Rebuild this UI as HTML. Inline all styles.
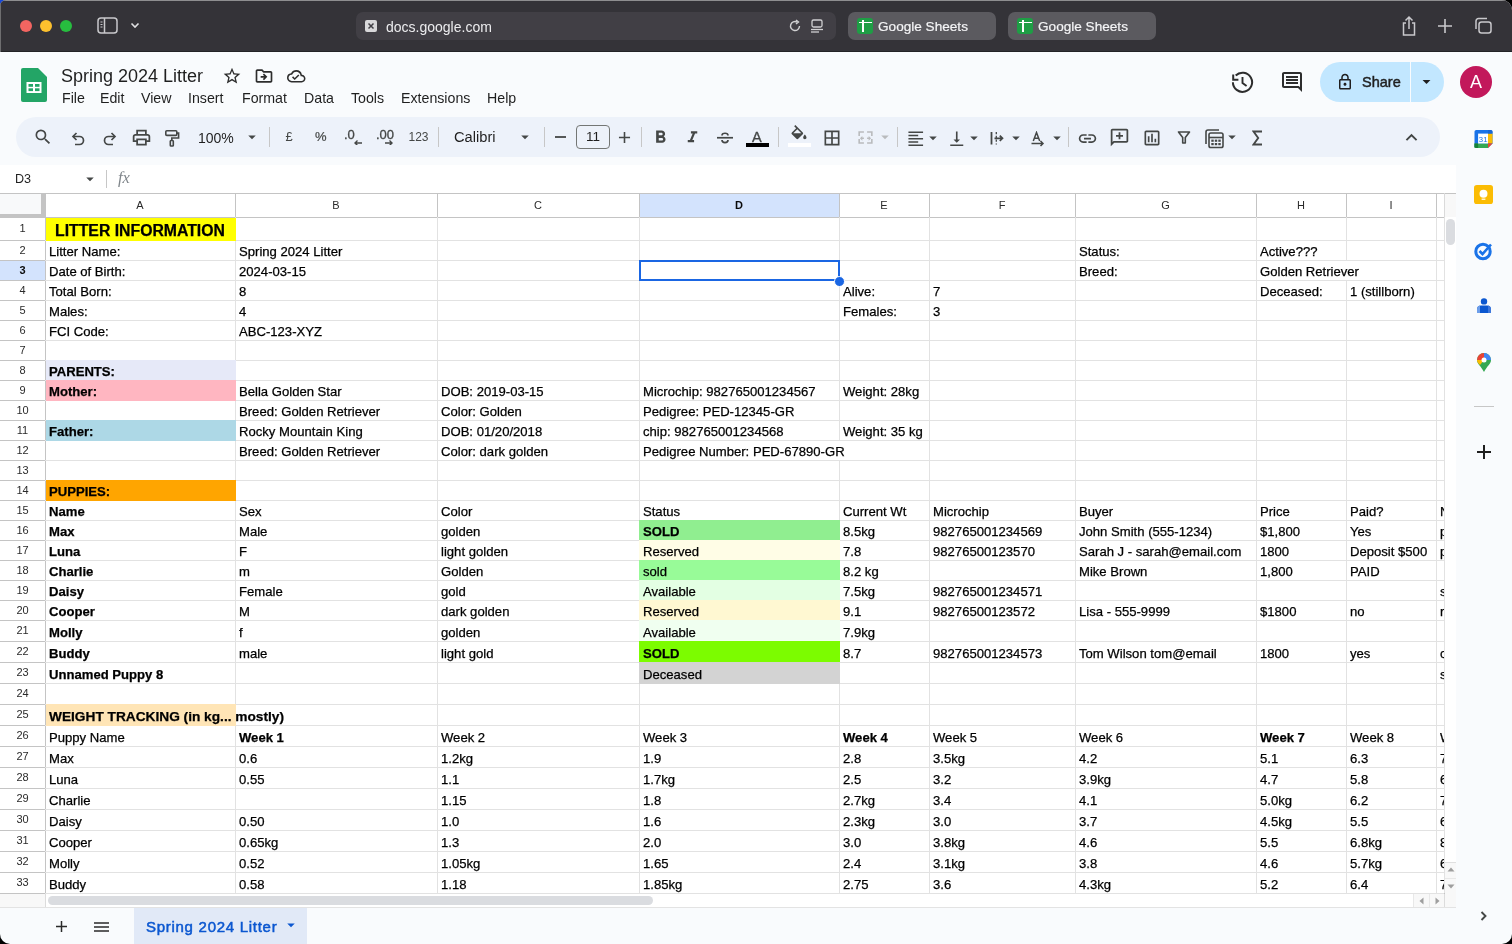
<!DOCTYPE html>
<html><head><meta charset="utf-8">
<style>
*{margin:0;padding:0;box-sizing:border-box}
html,body{width:1512px;height:944px;overflow:hidden;background:#000;font-family:"Liberation Sans",sans-serif}
.abs{position:absolute}
#win{position:absolute;left:0;top:0;width:1512px;height:944px;background:#f9fbfd;border-radius:6px 10px 10px 10px;overflow:hidden;will-change:transform}
#safari{position:absolute;left:0;top:0;width:1512px;height:52px;background:#343338;border-bottom:1px solid #232326}
.tl{position:absolute;top:20px;width:12px;height:12px;border-radius:50%}
.stab{position:absolute;top:12px;height:28px;width:148px;background:#5b5a5f;border-radius:7px;color:#f4f4f6;font-size:13.6px;line-height:29px;-webkit-text-stroke:0.2px #f4f4f6}
.sico{position:absolute;top:6px;left:9px;width:16px;height:16px;background:#1e9e45;border-radius:3px}.sico:before{content:"";position:absolute;left:1.5px;top:3.5px;width:13px;height:1.8px;background:#fff}.sico:after{content:"";position:absolute;left:5px;top:2px;width:1.8px;height:12px;background:#fff}
.menu{position:absolute;top:89px;font-size:14.2px;color:#1f1f1f}
.tb{position:absolute}
.hl{position:absolute;left:45px;width:1399px;height:1px;background:#e2e2e2}
.vl{position:absolute;width:1px;background:#e2e2e2}
.c{position:absolute;font-size:13.1px;color:#000;white-space:nowrap;-webkit-text-stroke:0.25px #000}
.b{font-weight:bold}
.rn{position:absolute;left:0;width:45px;text-align:center;font-size:11px;color:#2a2a2a}
.ch{position:absolute;top:193px;height:24px;line-height:24px;text-align:center;font-size:11px;color:#2a2a2a}
</style></head><body>
<div class="abs" style="left:0;top:0;width:6px;height:6px;background:#1546d8"></div>
<div id="win">
<!-- SAFARI BAR -->
<div id="safari">
  <div class="abs" style="left:0;top:0;width:1512px;height:1px;background:#8e8e90"></div>
  <div class="abs" style="left:0;top:0;width:1px;height:52px;background:#6e6e70"></div>
  <div class="tl" style="left:20px;background:#f36561"></div>
  <div class="tl" style="left:40px;background:#fcc02e"></div>
  <div class="tl" style="left:60px;background:#27bd3f"></div>
  <svg class="abs" style="left:97px;top:17px" width="22" height="18" viewBox="0 0 22 18"><rect x="1" y="1" width="19" height="15" rx="3" fill="none" stroke="#c9c9cc" stroke-width="1.5"/><line x1="7.5" y1="1" x2="7.5" y2="16" stroke="#c9c9cc" stroke-width="1.5"/><line x1="3.5" y1="5" x2="5.5" y2="5" stroke="#c9c9cc"/><line x1="3.5" y1="7.5" x2="5.5" y2="7.5" stroke="#c9c9cc"/><line x1="3.5" y1="10" x2="5.5" y2="10" stroke="#c9c9cc"/></svg>
  <svg class="abs" style="left:130px;top:21px" width="10" height="8" viewBox="0 0 10 8"><path d="M1.5 2.5 L5 6 L8.5 2.5" fill="none" stroke="#e0e0e2" stroke-width="1.6"/></svg>
  <div class="abs" style="left:356px;top:12px;width:480px;height:28px;background:#413f45;border-radius:7px"></div>
  <div class="abs" style="left:365px;top:20px;width:12px;height:12px;background:#d8d8da;border-radius:2px"></div>
  <svg class="abs" style="left:365px;top:20px" width="12" height="12" viewBox="0 0 12 12"><path d="M3.5 3.5 L8.5 8.5 M8.5 3.5 L3.5 8.5" stroke="#413f45" stroke-width="1.5"/></svg>
  <div class="abs" style="left:386px;top:19px;font-size:14px;color:#ececee;line-height:16px">docs.google.com</div>
  <svg class="abs" style="left:788px;top:19px" width="14" height="14" viewBox="0 0 14 14"><path d="M11.5 7 A4.5 4.5 0 1 1 9 3" fill="none" stroke="#d0d0d2" stroke-width="1.4"/><path d="M8 1 L10.5 3 L8 5" fill="none" stroke="#d0d0d2" stroke-width="1.4"/></svg>
  <svg class="abs" style="left:810px;top:18px" width="14" height="16" viewBox="0 0 14 16"><rect x="2" y="2" width="10" height="7" rx="1.5" fill="none" stroke="#d0d0d2" stroke-width="1.3"/><line x1="1" y1="11.5" x2="13" y2="11.5" stroke="#d0d0d2" stroke-width="1.3"/><line x1="1" y1="14" x2="9" y2="14" stroke="#d0d0d2" stroke-width="1.3"/></svg>
  <div class="stab" style="left:848px"><div class="sico"></div><span style="position:absolute;left:30px">Google Sheets</span></div>
  <div class="stab" style="left:1008px"><div class="sico"></div><span style="position:absolute;left:30px">Google Sheets</span></div>
  <svg class="abs" style="left:1400px;top:15px" width="18" height="22" viewBox="0 0 18 22"><path d="M6 8 H3.5 V20 H14.5 V8 H12" fill="none" stroke="#c9c9cc" stroke-width="1.5"/><path d="M9 14 V2 M5.5 5.5 L9 2 L12.5 5.5" fill="none" stroke="#c9c9cc" stroke-width="1.5"/></svg>
  <svg class="abs" style="left:1437px;top:18px" width="16" height="16" viewBox="0 0 16 16"><path d="M8 1 V15 M1 8 H15" stroke="#c9c9cc" stroke-width="1.6"/></svg>
  <svg class="abs" style="left:1474px;top:17px" width="19" height="18" viewBox="0 0 19 18"><rect x="5" y="5" width="12" height="11" rx="2.5" fill="none" stroke="#c9c9cc" stroke-width="1.5"/><path d="M2 12 V4 A2.5 2.5 0 0 1 4.5 1.5 H13" fill="none" stroke="#c9c9cc" stroke-width="1.5"/></svg>
</div>
<svg class="abs" style="left:21px;top:68px" width="26" height="34" viewBox="0 0 26 34"><path d="M2 0 H17 L26 9 V32 A2 2 0 0 1 24 34 H2 A2 2 0 0 1 0 32 V2 A2 2 0 0 1 2 0Z" fill="#23a566"/><path d="M17 0 L26 9 H19 A2 2 0 0 1 17 7Z" fill="#8ed1b1" opacity="0.0"/><rect x="5.5" y="14" width="15" height="11" fill="#fff"/><rect x="7.5" y="16" width="4.5" height="2.8" fill="#23a566"/><rect x="14" y="16" width="4.5" height="2.8" fill="#23a566"/><rect x="7.5" y="20.3" width="4.5" height="2.8" fill="#23a566"/><rect x="14" y="20.3" width="4.5" height="2.8" fill="#23a566"/></svg>
<div class="abs" style="left:61px;top:64.5px;font-size:18px;color:#1f1f1f;line-height:22px">Spring 2024 Litter</div>
<svg class="abs" style="left:222px;top:65.5px" width="20" height="20" viewBox="0 0 24 24"><path d="M22 9.24l-7.19-.62L12 2 9.19 8.63 2 9.24l5.46 4.73L5.82 21 12 17.27 18.18 21l-1.63-7.03L22 9.24zM12 15.4l-3.76 2.27 1-4.28-3.32-2.88 4.38-.38L12 6.1l1.71 4.04 4.38.38-3.32 2.88 1 4.28L12 15.4z" fill="#2d2d2d"/></svg>
<svg class="abs" style="left:254px;top:65.5px" width="20" height="20" viewBox="0 0 24 24"><path d="M20 6h-8l-2-2H4c-1.1 0-1.99.9-1.99 2L2 18c0 1.1.9 2 2 2h16c1.1 0 2-.9 2-2V8c0-1.1-.9-2-2-2zm0 12H4V6h5.17l2 2H20v10zm-7.84-6H8v2h4.16l-1.59 1.59L11.99 17 16 13.01 11.99 9l-1.41 1.41L12.16 12z" fill="#2d2d2d"/></svg>
<svg class="abs" style="left:287px;top:66.5px" width="18.5" height="18.5" viewBox="0 0 24 24"><path d="M19.35 10.04A7.49 7.49 0 0 0 12 4C9.11 4 6.6 5.64 5.35 8.04A5.994 5.994 0 0 0 0 14c0 3.31 2.69 6 6 6h13c2.76 0 5-2.24 5-5 0-2.64-2.05-4.78-4.65-4.96zM19 18H6c-2.21 0-4-1.79-4-4 0-2.05 1.53-3.76 3.56-3.97l1.07-.11.5-.95A5.469 5.469 0 0 1 12 6c2.62 0 4.88 1.86 5.39 4.43l.3 1.5 1.53.11A2.98 2.98 0 0 1 22 15c0 1.65-1.35 3-3 3zm-9-3.82l-2.09-2.09L6.5 13.5 10 17l6.01-6.01-1.41-1.41z" fill="#2d2d2d"/></svg>
<div class="menu" style="left:62px;line-height:18px">File</div>
<div class="menu" style="left:100px;line-height:18px">Edit</div>
<div class="menu" style="left:141px;line-height:18px">View</div>
<div class="menu" style="left:188px;line-height:18px">Insert</div>
<div class="menu" style="left:242px;line-height:18px">Format</div>
<div class="menu" style="left:304px;line-height:18px">Data</div>
<div class="menu" style="left:351px;line-height:18px">Tools</div>
<div class="menu" style="left:401px;line-height:18px">Extensions</div>
<div class="menu" style="left:487px;line-height:18px">Help</div>
<svg class="abs" style="left:1230px;top:69.5px" width="24" height="24" viewBox="0 0 24 24"><path d="M2.9 12.3 A9.6 9.6 0 1 0 5.7 5.5" fill="none" stroke="#2d2d2d" stroke-width="2"/><path d="M3.2 4.4 V9.7 H8.4" fill="none" stroke="#2d2d2d" stroke-width="2"/><path d="M12.5 7 V13 L16.6 16.1" fill="none" stroke="#2d2d2d" stroke-width="1.9"/></svg>
<svg class="abs" style="left:1280px;top:70px" width="24" height="24" viewBox="0 0 24 24"><path d="M21.99 4c0-1.1-.89-2-1.99-2H4c-1.1 0-2 .9-2 2v12c0 1.1.9 2 2 2h14l4 4-.01-18zM20 4v13.17L18.83 16H4V4h16zM6 12h12v2H6zm0-3h12v2H6zm0-3h12v2H6z" fill="#2d2d2d"/></svg>
<div class="abs" style="left:1320px;top:62px;width:124px;height:40px;border-radius:20px;background:#c2e7ff"></div>
<div class="abs" style="left:1410px;top:62px;width:1px;height:40px;background:#f9fbfd"></div>
<svg class="abs" style="left:1336px;top:73px" width="18" height="18" viewBox="0 0 24 24"><path d="M18 8h-1V6c0-2.76-2.24-5-5-5S7 3.24 7 6v2H6c-1.1 0-2 .9-2 2v10c0 1.1.9 2 2 2h12c1.1 0 2-.9 2-2V10c0-1.1-.9-2-2-2zM9 6c0-1.66 1.34-3 3-3s3 1.34 3 3v2H9V6zm9 14H6V10h12v10zm-6-3c1.1 0 2-.9 2-2s-.9-2-2-2-2 .9-2 2 .9 2 2 2z" fill="#1f1f1f"/></svg>
<div class="abs" style="left:1362px;top:73px;font-size:14.5px;color:#1f1f1f;line-height:18px;-webkit-text-stroke:0.45px #1f1f1f">Share</div>
<svg class="abs" style="left:1417px;top:72px" width="19" height="19" viewBox="0 0 24 24"><path d="M7 10l5 5 5-5z" fill="#1f1f1f"/></svg>
<div class="abs" style="left:1460px;top:66px;width:32px;height:32px;border-radius:50%;background:#c2185b;color:#fff;font-size:18px;line-height:32px;text-align:center">A</div>
<div class="abs" style="left:16px;top:117px;width:1424px;height:40px;border-radius:20px;background:#edf2fa"></div>
<svg class="abs" style="left:33px;top:127px" width="20" height="20" viewBox="0 0 24 24"><path d="M15.5 14h-.79l-.28-.27A6.471 6.471 0 0 0 16 9.5 6.5 6.5 0 1 0 9.5 16c1.61 0 3.09-.59 4.23-1.57l.27.28v.79l5 4.99L20.49 19l-4.99-5zm-6 0C7.01 14 5 11.99 5 9.5S7.01 5 9.5 5 14 7.01 14 9.5 11.99 14 9.5 14z" fill="#444746"/></svg>
<svg class="abs" style="left:69px;top:130px" width="16" height="16" viewBox="0 0 16 16"><path d="M4.5 6.5 H10.5 A4 4 0 0 1 10.5 14.5 H6" fill="none" stroke="#444746" stroke-width="1.7"/><path d="M7.5 3 L4 6.5 L7.5 10" fill="none" stroke="#444746" stroke-width="1.7"/></svg>
<svg class="abs" style="left:103px;top:130px" width="16" height="16" viewBox="0 0 16 16"><path d="M11.5 6.5 H5.5 A4 4 0 0 0 5.5 14.5 H10" fill="none" stroke="#444746" stroke-width="1.7"/><path d="M8.5 3 L12 6.5 L8.5 10" fill="none" stroke="#444746" stroke-width="1.7"/></svg>
<svg class="abs" style="left:131px;top:127px" width="21" height="21" viewBox="0 0 24 24"><path d="M19 8h-1V3H6v5H5c-1.66 0-3 1.34-3 3v6h4v4h12v-4h4v-6c0-1.66-1.34-3-3-3zM8 5h8v3H8V5zm8 14H8v-4h8v4zm2-4v-2H6v2H4v-4c0-.55.45-1 1-1h14c.55 0 1 .45 1 1v4h-2z" fill="#444746"/></svg>

<svg class="abs" style="left:164px;top:129px" width="16" height="18" viewBox="0 0 16 18"><rect x="1.8" y="1.8" width="11" height="4.6" rx="1" fill="none" stroke="#444746" stroke-width="1.6"/><path d="M12.8 4.1 H14.6 V9 H7.8 V11.5" fill="none" stroke="#444746" stroke-width="1.6"/><rect x="6.3" y="11.5" width="3" height="5.5" rx="0.8" fill="none" stroke="#444746" stroke-width="1.6"/></svg>
<div class="abs" style="left:198px;top:129px;font-size:14px;color:#1f1f1f;line-height:18px">100%</div>
<svg class="abs" style="left:243px;top:128px" width="18" height="18" viewBox="0 0 24 24"><path d="M7 10l5 5 5-5z" fill="#444746"/></svg>
<div class="abs" style="left:269px;top:127px;width:1px;height:20px;background:#c7c7c7"></div>
<div class="abs" style="left:285.5px;top:127.5px;font-size:13px;color:#444746;line-height:18px">£</div>
<div class="abs" style="left:315px;top:127.5px;font-size:13px;color:#444746;line-height:18px;-webkit-text-stroke:0.2px #444746">%</div>
<div class="abs" style="left:344px;top:127px;font-size:13px;color:#444746;line-height:16px;-webkit-text-stroke:0.3px #444746">.0</div>
<svg class="abs" style="left:353px;top:140px" width="10" height="5" viewBox="0 -1.5 10 5"><path d="M9 1.5 H2 M4.5 -1 L2 1.5 L4.5 4" fill="none" stroke="#444746" stroke-width="1.4"/></svg>
<div class="abs" style="left:376px;top:127px;font-size:13px;color:#444746;line-height:16px;-webkit-text-stroke:0.3px #444746">.00</div>
<svg class="abs" style="left:384px;top:140px" width="10" height="5" viewBox="0 -1.5 10 5"><path d="M1 1.5 H8 M5.5 -1 L8 1.5 L5.5 4" fill="none" stroke="#444746" stroke-width="1.4"/></svg>
<div class="abs" style="left:408.5px;top:128.5px;font-size:12px;color:#444746;line-height:16px">123</div>
<div class="abs" style="left:438px;top:127px;width:1px;height:20px;background:#c7c7c7"></div>
<div class="abs" style="left:454px;top:128px;font-size:14.7px;color:#1f1f1f;line-height:18px">Calibri</div>
<svg class="abs" style="left:516px;top:128px" width="18" height="18" viewBox="0 0 24 24"><path d="M7 10l5 5 5-5z" fill="#444746"/></svg>
<div class="abs" style="left:544px;top:127px;width:1px;height:20px;background:#c7c7c7"></div>
<svg class="abs" style="left:555px;top:136px" width="11" height="2" viewBox="0 0 11 2"><path d="M0 1 H11" stroke="#444746" stroke-width="1.8"/></svg>
<div class="abs" style="left:576px;top:125px;width:34px;height:24px;border:1px solid #747775;border-radius:4px;font-size:13.5px;color:#1f1f1f;line-height:22px;text-align:center">11</div>
<svg class="abs" style="left:615px;top:128px" width="19" height="19" viewBox="0 0 24 24"><path d="M19 13h-6v6h-2v-6H5v-2h6V5h2v6h6v2z" fill="#444746"/></svg>
<div class="abs" style="left:641px;top:127px;width:1px;height:20px;background:#c7c7c7"></div>
<svg class="abs" style="left:650px;top:127px" width="21" height="21" viewBox="0 0 24 24"><path d="M15.6 10.79c.97-.67 1.65-1.77 1.65-2.79 0-2.26-1.75-4-4-4H7v14h7.04c2.09 0 3.71-1.7 3.71-3.79 0-1.52-.86-2.82-2.15-3.42zM10 6.5h3c.83 0 1.5.67 1.5 1.5s-.67 1.5-1.5 1.5h-3v-3zm3.5 9H10v-3h3.5c.83 0 1.5.67 1.5 1.5s-.67 1.5-1.5 1.5z" fill="#444746"/></svg>
<svg class="abs" style="left:683px;top:128px" width="19" height="19" viewBox="0 0 24 24"><path d="M10 4v3h2.21l-3.42 8H6v3h8v-3h-2.21l3.42-8H18V4z" fill="#444746"/></svg>
<svg class="abs" style="left:717px;top:127.5px" width="16" height="16" viewBox="0 0 16 16"><path d="M11 7.5 C11 4.5 5 4.5 5 7.5" fill="none" stroke="#444746" stroke-width="1.7"/><path d="M5 12 C5 15.5 11 15.5 11 12" fill="none" stroke="#444746" stroke-width="1.7"/><path d="M0 9.75 H16" stroke="#444746" stroke-width="1.7"/></svg>
<div class="abs" style="left:752px;top:128.5px;font-size:14.5px;color:#444746;line-height:16px;-webkit-text-stroke:0.35px #444746">A</div>
<div class="abs" style="left:746px;top:143px;width:23px;height:4px;background:#000"></div>
<div class="abs" style="left:778px;top:127px;width:1px;height:20px;background:#c7c7c7"></div>
<svg class="abs" style="left:789px;top:125px" width="20" height="20" viewBox="0 0 24 24"><path d="M16.56 8.94L7.62 0 6.21 1.41l2.38 2.38-5.15 5.15a1.49 1.49 0 0 0 0 2.12l5.5 5.5c.29.29.68.44 1.06.44s.77-.15 1.06-.44l5.5-5.5c.59-.58.59-1.53 0-2.12zM5.21 10L10 5.21 14.79 10H5.21zM19 11.5s-2 2.17-2 3.5c0 1.1.9 2 2 2s2-.9 2-2c0-1.33-2-3.5-2-3.5z" fill="#444746"/></svg>
<div class="abs" style="left:788px;top:143px;width:23px;height:4px;background:#fff"></div>
<svg class="abs" style="left:822px;top:128px" width="20" height="20" viewBox="0 0 24 24"><path d="M3 3v18h18V3H3zm8 16H5v-6h6v6zm0-8H5V5h6v6zm8 8h-6v-6h6v6zm0-8h-6V5h6v6z" fill="#444746"/></svg>
<svg class="abs" style="left:856px;top:128px" width="19" height="19" viewBox="0 0 24 24"><path d="M5 10H3V4h7v2H5v4zm14 0h2V4h-7v2h5v4zM5 14H3v6h7v-2H5v-4zm14 4h-5v2h7v-6h-2v4zM10 12H8v-2l-3 3 3 3v-2h2zm4 0h2v-2l3 3-3 3v-2h-2z" fill="#b9bbbd"/></svg>
<svg class="abs" style="left:876px;top:128px" width="18" height="18" viewBox="0 0 24 24"><path d="M7 10l5 5 5-5z" fill="#b9bbbd"/></svg>
<div class="abs" style="left:897px;top:127px;width:1px;height:20px;background:#c7c7c7"></div>
<svg class="abs" style="left:906px;top:128.5px" width="19.5" height="19.5" viewBox="0 0 24 24"><path d="M15 15H3v2h12v-2zm0-8H3v2h12V7zM3 13h18v-2H3v2zm0 8h18v-2H3v2zM3 3v2h18V3H3z" fill="#444746"/></svg>
<svg class="abs" style="left:924px;top:128.5px" width="18" height="18" viewBox="0 0 24 24"><path d="M7 10l5 5 5-5z" fill="#444746"/></svg>
<svg class="abs" style="left:946.5px;top:128.5px" width="19.5" height="19.5" viewBox="0 0 24 24"><path d="M16 13h-3V3h-2v10H8l4 4 4-4zM4 19v2h16v-2H4z" fill="#444746"/></svg>
<svg class="abs" style="left:965px;top:128.5px" width="18" height="18" viewBox="0 0 24 24"><path d="M7 10l5 5 5-5z" fill="#444746"/></svg>
<svg class="abs" style="left:990px;top:131px" width="15" height="15" viewBox="0 0 15 15"><path d="M1.5 1 V13.5" stroke="#444746" stroke-width="1.8"/><path d="M6.3 1 V13.5" stroke="#444746" stroke-width="1.3" stroke-dasharray="2.2 1.6"/><path d="M4.5 7.3 H12.5 M9.8 4.6 L12.5 7.3 L9.8 10" fill="none" stroke="#444746" stroke-width="1.7"/></svg>
<svg class="abs" style="left:1006.5px;top:128.5px" width="18" height="18" viewBox="0 0 24 24"><path d="M7 10l5 5 5-5z" fill="#444746"/></svg>
<svg class="abs" style="left:1031px;top:130.5px" width="14" height="16" viewBox="0 0 14 16"><path d="M2.3 10 L5.5 1.5 L8.7 10 M3.4 7.2 H7.6" fill="none" stroke="#444746" stroke-width="1.5"/><path d="M0.5 12.5 H12 M9.5 10 L12 12.5 L9.5 15" fill="none" stroke="#444746" stroke-width="1.5"/></svg>
<svg class="abs" style="left:1047.5px;top:128.5px" width="18" height="18" viewBox="0 0 24 24"><path d="M7 10l5 5 5-5z" fill="#444746"/></svg>
<div class="abs" style="left:1068px;top:127px;width:1px;height:20px;background:#c7c7c7"></div>
<svg class="abs" style="left:1077px;top:128px" width="21" height="21" viewBox="0 0 24 24"><path d="M3.9 12c0-1.71 1.39-3.1 3.1-3.1h4V7H7c-2.76 0-5 2.24-5 5s2.24 5 5 5h4v-1.9H7c-1.71 0-3.1-1.39-3.1-3.1zM8 13h8v-2H8v2zm9-6h-4v1.9h4c1.71 0 3.1 1.39 3.1 3.1s-1.39 3.1-3.1 3.1h-4V17h4c2.76 0 5-2.24 5-5s-2.24-5-5-5z" fill="#444746"/></svg>
<svg class="abs" style="left:1109px;top:127px" width="21" height="21" viewBox="0 0 24 24"><path d="M4 2h16c1.1 0 2 .9 2 2v12c0 1.1-.9 2-2 2H6l-4 4V4c0-1.1.9-2 2-2zm0 2v13.17L5.17 16H20V4H4zm7 2h2v3h3v2h-3v3h-2v-3H8V9h3V6z" fill="#444746"/></svg>
<svg class="abs" style="left:1142px;top:128px" width="20" height="20" viewBox="0 0 24 24"><path d="M19 3H5c-1.1 0-2 .9-2 2v14c0 1.1.9 2 2 2h14c1.1 0 2-.9 2-2V5c0-1.1-.9-2-2-2zm0 16H5V5h14v14zM7 10h2v7H7zm4-3h2v10h-2zm4 6h2v4h-2z" fill="#444746"/></svg>
<svg class="abs" style="left:1177px;top:130px" width="14" height="15" viewBox="0 0 14 15"><path d="M1.5 2 H12.5 L8.3 7.5 V13 H5.7 V7.5 Z" fill="none" stroke="#444746" stroke-width="1.6" stroke-linejoin="round"/></svg>
<svg class="abs" style="left:1205px;top:129px" width="19" height="20" viewBox="0 0 19 20"><path d="M1 15 V3 A2 2 0 0 1 3 1 H14" fill="none" stroke="#444746" stroke-width="1.6"/><rect x="4" y="4" width="14" height="14.5" rx="1.8" fill="none" stroke="#444746" stroke-width="1.6"/><path d="M4 8.5 H18" stroke="#444746" stroke-width="1.6"/><g fill="#444746"><rect x="6.3" y="10.6" width="2.4" height="2.2"/><rect x="9.8" y="10.6" width="2.4" height="2.2"/><rect x="13.3" y="10.6" width="2.4" height="2.2"/><rect x="6.3" y="14" width="2.4" height="2.2"/><rect x="9.8" y="14" width="2.4" height="2.2"/><rect x="13.3" y="14" width="2.4" height="2.2"/></g></svg>
<svg class="abs" style="left:1223px;top:128px" width="18" height="18" viewBox="0 0 24 24"><path d="M7 10l5 5 5-5z" fill="#444746"/></svg>
<svg class="abs" style="left:1252px;top:130px" width="11" height="16" viewBox="0 0 11 16"><path d="M10 1.5 H1.5 L6.2 8 L1.5 14.5 H10" fill="none" stroke="#444746" stroke-width="1.9" stroke-linejoin="miter"/></svg>
<svg class="abs" style="left:1400px;top:126px" width="23" height="23" viewBox="0 0 24 24"><path d="M12 8l-6 6 1.41 1.41L12 10.83l4.59 4.58L18 14z" fill="#444746"/></svg>
<div class="abs" style="left:0;top:165px;width:1456px;height:28px;background:#fff"></div>
<div class="abs" style="left:15px;top:171px;font-size:12.6px;color:#1f1f1f;line-height:16px">D3</div>
<svg class="abs" style="left:81px;top:170px" width="18" height="18" viewBox="0 0 24 24"><path d="M7 10l5 5 5-5z" fill="#444746"/></svg>
<div class="abs" style="left:106px;top:170px;width:1px;height:18px;background:#c7c7c7"></div>
<div class="abs" style="left:118px;top:169px;font-size:16.5px;color:#80868b;line-height:18px;font-family:'Liberation Serif',serif;font-style:italic">fx</div>
<div class="abs" style="left:0;top:193px;width:1444px;height:700px;background:#fff"></div>
<div class="abs" style="left:0;top:193px;width:1456px;height:1px;background:#c4c4c4"></div>
<div class="abs" style="left:0;top:217px;width:1456px;height:1px;background:#c4c4c4"></div>
<div class="abs" style="left:0;top:194px;width:45px;height:23px;background:#f8f9fa"></div>
<div class="abs" style="left:41px;top:194px;width:4px;height:24px;background:#c4c4c4"></div>
<div class="abs" style="left:0;top:214px;width:45px;height:4px;background:#c4c4c4"></div>
<div class="abs" style="left:639px;top:194px;width:200px;height:23px;background:#d3e3fd"></div>
<div class="ch" style="left:45px;width:190px;">A</div>
<div class="abs" style="left:45px;top:193px;width:1px;height:25px;background:#c4c4c4"></div>
<div class="ch" style="left:235px;width:202px;">B</div>
<div class="abs" style="left:235px;top:193px;width:1px;height:25px;background:#c4c4c4"></div>
<div class="ch" style="left:437px;width:202px;">C</div>
<div class="abs" style="left:437px;top:193px;width:1px;height:25px;background:#c4c4c4"></div>
<div class="ch" style="left:639px;width:200px;font-weight:bold;color:#0a0a0a;">D</div>
<div class="abs" style="left:639px;top:193px;width:1px;height:25px;background:#c4c4c4"></div>
<div class="ch" style="left:839px;width:90px;">E</div>
<div class="abs" style="left:839px;top:193px;width:1px;height:25px;background:#c4c4c4"></div>
<div class="ch" style="left:929px;width:146px;">F</div>
<div class="abs" style="left:929px;top:193px;width:1px;height:25px;background:#c4c4c4"></div>
<div class="ch" style="left:1075px;width:181px;">G</div>
<div class="abs" style="left:1075px;top:193px;width:1px;height:25px;background:#c4c4c4"></div>
<div class="ch" style="left:1256px;width:90px;">H</div>
<div class="abs" style="left:1256px;top:193px;width:1px;height:25px;background:#c4c4c4"></div>
<div class="ch" style="left:1346px;width:90px;">I</div>
<div class="abs" style="left:1346px;top:193px;width:1px;height:25px;background:#c4c4c4"></div>
<div class="abs" style="left:1436px;top:193px;width:1px;height:25px;background:#c4c4c4"></div>
<div class="abs" style="left:1445px;top:194px;width:11px;height:23px;background:#f8f8f8"></div>
<div class="abs" style="left:1444px;top:193px;width:1px;height:25px;background:#dadada"></div>
<div class="abs" style="left:45px;top:217px;width:1px;height:676px;background:#c4c4c4"></div>
<div class="abs" style="left:0;top:260px;width:45px;height:20px;background:#d3e3fd"></div>
<div class="rn" style="top:217px;height:23px;line-height:23px;">1</div>
<div class="abs" style="left:0;top:240px;width:45px;height:1px;background:#c4c4c4"></div>
<div class="rn" style="top:240px;height:20px;line-height:20px;">2</div>
<div class="abs" style="left:0;top:260px;width:45px;height:1px;background:#c4c4c4"></div>
<div class="rn" style="top:260px;height:20px;line-height:20px;font-weight:bold;color:#0a0a0a;">3</div>
<div class="abs" style="left:0;top:280px;width:45px;height:1px;background:#c4c4c4"></div>
<div class="rn" style="top:280px;height:20px;line-height:20px;">4</div>
<div class="abs" style="left:0;top:300px;width:45px;height:1px;background:#c4c4c4"></div>
<div class="rn" style="top:300px;height:20px;line-height:20px;">5</div>
<div class="abs" style="left:0;top:320px;width:45px;height:1px;background:#c4c4c4"></div>
<div class="rn" style="top:320px;height:20px;line-height:20px;">6</div>
<div class="abs" style="left:0;top:340px;width:45px;height:1px;background:#c4c4c4"></div>
<div class="rn" style="top:340px;height:20px;line-height:20px;">7</div>
<div class="abs" style="left:0;top:360px;width:45px;height:1px;background:#c4c4c4"></div>
<div class="rn" style="top:360px;height:20px;line-height:20px;">8</div>
<div class="abs" style="left:0;top:380px;width:45px;height:1px;background:#c4c4c4"></div>
<div class="rn" style="top:380px;height:20px;line-height:20px;">9</div>
<div class="abs" style="left:0;top:400px;width:45px;height:1px;background:#c4c4c4"></div>
<div class="rn" style="top:400px;height:20px;line-height:20px;">10</div>
<div class="abs" style="left:0;top:420px;width:45px;height:1px;background:#c4c4c4"></div>
<div class="rn" style="top:420px;height:20px;line-height:20px;">11</div>
<div class="abs" style="left:0;top:440px;width:45px;height:1px;background:#c4c4c4"></div>
<div class="rn" style="top:440px;height:20px;line-height:20px;">12</div>
<div class="abs" style="left:0;top:460px;width:45px;height:1px;background:#c4c4c4"></div>
<div class="rn" style="top:460px;height:20px;line-height:20px;">13</div>
<div class="abs" style="left:0;top:480px;width:45px;height:1px;background:#c4c4c4"></div>
<div class="rn" style="top:480px;height:20px;line-height:20px;">14</div>
<div class="abs" style="left:0;top:500px;width:45px;height:1px;background:#c4c4c4"></div>
<div class="rn" style="top:500px;height:20px;line-height:20px;">15</div>
<div class="abs" style="left:0;top:520px;width:45px;height:1px;background:#c4c4c4"></div>
<div class="rn" style="top:520px;height:20px;line-height:20px;">16</div>
<div class="abs" style="left:0;top:540px;width:45px;height:1px;background:#c4c4c4"></div>
<div class="rn" style="top:540px;height:20px;line-height:20px;">17</div>
<div class="abs" style="left:0;top:560px;width:45px;height:1px;background:#c4c4c4"></div>
<div class="rn" style="top:560px;height:20px;line-height:20px;">18</div>
<div class="abs" style="left:0;top:580px;width:45px;height:1px;background:#c4c4c4"></div>
<div class="rn" style="top:580px;height:20px;line-height:20px;">19</div>
<div class="abs" style="left:0;top:600px;width:45px;height:1px;background:#c4c4c4"></div>
<div class="rn" style="top:600px;height:20px;line-height:20px;">20</div>
<div class="abs" style="left:0;top:620px;width:45px;height:1px;background:#c4c4c4"></div>
<div class="rn" style="top:620px;height:21px;line-height:21px;">21</div>
<div class="abs" style="left:0;top:641px;width:45px;height:1px;background:#c4c4c4"></div>
<div class="rn" style="top:641px;height:21px;line-height:21px;">22</div>
<div class="abs" style="left:0;top:662px;width:45px;height:1px;background:#c4c4c4"></div>
<div class="rn" style="top:662px;height:21px;line-height:21px;">23</div>
<div class="abs" style="left:0;top:683px;width:45px;height:1px;background:#c4c4c4"></div>
<div class="rn" style="top:683px;height:21px;line-height:21px;">24</div>
<div class="abs" style="left:0;top:704px;width:45px;height:1px;background:#c4c4c4"></div>
<div class="rn" style="top:704px;height:21px;line-height:21px;">25</div>
<div class="abs" style="left:0;top:725px;width:45px;height:1px;background:#c4c4c4"></div>
<div class="rn" style="top:725px;height:21px;line-height:21px;">26</div>
<div class="abs" style="left:0;top:746px;width:45px;height:1px;background:#c4c4c4"></div>
<div class="rn" style="top:746px;height:21px;line-height:21px;">27</div>
<div class="abs" style="left:0;top:767px;width:45px;height:1px;background:#c4c4c4"></div>
<div class="rn" style="top:767px;height:21px;line-height:21px;">28</div>
<div class="abs" style="left:0;top:788px;width:45px;height:1px;background:#c4c4c4"></div>
<div class="rn" style="top:788px;height:21px;line-height:21px;">29</div>
<div class="abs" style="left:0;top:809px;width:45px;height:1px;background:#c4c4c4"></div>
<div class="rn" style="top:809px;height:21px;line-height:21px;">30</div>
<div class="abs" style="left:0;top:830px;width:45px;height:1px;background:#c4c4c4"></div>
<div class="rn" style="top:830px;height:21px;line-height:21px;">31</div>
<div class="abs" style="left:0;top:851px;width:45px;height:1px;background:#c4c4c4"></div>
<div class="rn" style="top:851px;height:21px;line-height:21px;">32</div>
<div class="abs" style="left:0;top:872px;width:45px;height:1px;background:#c4c4c4"></div>
<div class="rn" style="top:872px;height:21px;line-height:21px;">33</div>
<div class="abs" style="left:0;top:893px;width:45px;height:1px;background:#c4c4c4"></div>
<div class="abs" style="left:1445px;top:217px;width:11px;height:690px;background:#fff"></div>
<div class="abs" style="left:1446px;top:219px;width:9px;height:26px;border-radius:5px;background:#dadce0"></div>
<div class="abs" style="left:0;top:893px;width:1445px;height:1px;background:#c4c4c4"></div>
<div class="abs" style="left:0;top:894px;width:1445px;height:13px;background:#fff"></div>
<div class="abs" style="left:48px;top:896px;width:605px;height:9px;border-radius:5px;background:#dadce0"></div>
<div class="abs" style="left:0;top:907px;width:1456px;height:1px;background:#e3e3e3"></div>
<div class="abs" style="left:1445px;top:862px;width:11px;height:32px;background:#f8f8f8"></div>
<div class="abs" style="left:1445px;top:862px;width:11px;height:1px;background:#e0e0e0"></div>
<div class="abs" style="left:1445px;top:878px;width:11px;height:1px;background:#e8e8e8"></div>
<svg class="abs" style="left:1447px;top:867px" width="8" height="5" viewBox="0 0 8 5"><path d="M0.5 4.5 L4 0.5 L7.5 4.5Z" fill="#9e9e9e"/></svg>
<svg class="abs" style="left:1447px;top:884px" width="8" height="5" viewBox="0 0 8 5"><path d="M0.5 0.5 L4 4.5 L7.5 0.5Z" fill="#9e9e9e"/></svg>
<div class="abs" style="left:1413px;top:894px;width:43px;height:13px;background:#f8f8f8"></div>
<div class="abs" style="left:1413px;top:894px;width:1px;height:13px;background:#e8e8e8"></div>
<div class="abs" style="left:1429px;top:894px;width:1px;height:13px;background:#e8e8e8"></div>
<div class="abs" style="left:1444px;top:894px;width:1px;height:13px;background:#dcdcdc"></div>
<svg class="abs" style="left:1419px;top:897px" width="5" height="8" viewBox="0 0 5 8"><path d="M4.5 0.5 L0.5 4 L4.5 7.5Z" fill="#9e9e9e"/></svg>
<svg class="abs" style="left:1435px;top:897px" width="5" height="8" viewBox="0 0 5 8"><path d="M0.5 0.5 L4.5 4 L0.5 7.5Z" fill="#9e9e9e"/></svg>
<div class="abs" style="left:0;top:894px;width:45px;height:13px;background:#f8f8f8"></div>
<div class="abs" style="left:45px;top:894px;width:1px;height:13px;background:#dcdcdc"></div>
<svg class="abs" style="left:56px;top:921px" width="11" height="11" viewBox="0 0 11 11"><path d="M5.5 0 V11 M0 5.5 H11" stroke="#2a2a2a" stroke-width="1.5"/></svg>
<svg class="abs" style="left:94px;top:922px" width="15" height="10" viewBox="0 0 15 10"><path d="M0 1 H15 M0 5 H15 M0 9 H15" stroke="#2a2a2a" stroke-width="1.6"/></svg>
<div class="abs" style="left:134px;top:908px;width:173px;height:36px;background:#e1e9f7"></div>
<div class="abs" style="left:146px;top:918px;font-size:15px;color:#0b57d0;line-height:18px;-webkit-text-stroke:0.5px #0b57d0;letter-spacing:0.72px">Spring 2024 Litter</div>
<svg class="abs" style="left:282px;top:916px" width="18" height="18" viewBox="0 0 24 24"><path d="M7 10l5 5 5-5z" fill="#0b57d0"/></svg>
<svg class="abs" style="left:1480px;top:911px" width="8" height="10" viewBox="0 0 8 10"><path d="M1.5 1 L5.5 5 L1.5 9" fill="none" stroke="#444746" stroke-width="1.9"/></svg>
<svg class="abs" style="left:1474px;top:130px" width="19" height="18" viewBox="0 0 20 20"><path d="M0 2 A2 2 0 0 1 2 0 H18 A2 2 0 0 1 20 2 V15 L15 20 H2 A2 2 0 0 1 0 18Z" fill="#1a73e8"/><rect x="15" y="4" width="5" height="11" fill="#fbbc04"/><rect x="0" y="15" width="15" height="5" fill="#34a853"/><path d="M2 20 A2 2 0 0 1 0 18 V15 H4 V20Z" fill="#188038"/><path d="M15 15 H20 L15 20Z" fill="#ea4335"/><path d="M15 0 H18 A2 2 0 0 1 20 2 V4 H15Z" fill="#1967d2"/><rect x="4" y="4" width="11" height="11" fill="#fff"/><text x="9.6" y="13.2" font-size="8.6" font-family="Liberation Sans" text-anchor="middle" fill="#1a73e8">31</text></svg>
<svg class="abs" style="left:1474px;top:185px" width="19" height="19" viewBox="0 0 20 20"><rect x="0" y="0" width="20" height="20" rx="3" fill="#fbbc04"/><circle cx="10" cy="9.3" r="4.2" fill="#fff"/><rect x="8" y="14.3" width="4" height="1.3" fill="#fff"/></svg>
<svg class="abs" style="left:1474px;top:241px" width="20" height="20" viewBox="0 0 20 20"><circle cx="9" cy="10.5" r="7.2" fill="none" stroke="#1a73e8" stroke-width="3"/><path d="M5.5 10 L8.5 13 L17 3.5" fill="none" stroke="#1a73e8" stroke-width="2.6"/><rect x="14" y="1" width="6" height="6" fill="#f9fbfd" opacity="0"/></svg>
<svg class="abs" style="left:1477px;top:298px" width="14" height="17" viewBox="0 0 14 17"><circle cx="7" cy="3.4" r="3.2" fill="#0b57d0"/><path d="M0 15 V11.5 A4 4 0 0 1 4 7.5 H10 A4 4 0 0 1 14 11.5 V15 Z" fill="#0b57d0"/><path d="M0 15 V11.5 A4 4 0 0 1 3 7.6 L3 15Z" fill="#6d9eea"/><path d="M11 7.6 A4 4 0 0 1 14 11.5 V15 H11Z" fill="#3f78dc"/></svg>
<svg class="abs" style="left:1475px;top:353px" width="18" height="19" viewBox="0 0 18 19"><path d="M9 0 A7 7 0 0 1 16 7 C16 11 12 13 9 19 C6 13 2 11 2 7 A7 7 0 0 1 9 0Z" fill="#34a853"/><path d="M9 0 A7 7 0 0 1 16 7 L9 7Z" fill="#4285f4"/><path d="M2 7 A7 7 0 0 1 9 0 L9 7Z" fill="#ea4335"/><path d="M2 7 L9 7 L5 12 C3 10 2 9 2 7Z" fill="#fbbc04"/><circle cx="9" cy="7" r="2.5" fill="#fff"/></svg>
<div class="abs" style="left:1474px;top:406px;width:20px;height:1px;background:#c7c7c7"></div>
<svg class="abs" style="left:1472px;top:440px" width="24" height="24" viewBox="0 0 24 24"><path d="M19 13h-6v6h-2v-6H5v-2h6V5h2v6h6v2z" fill="#1f1f1f"/></svg>
<div class="hl" style="top:240px"></div>
<div class="hl" style="top:260px"></div>
<div class="hl" style="top:280px"></div>
<div class="hl" style="top:300px"></div>
<div class="hl" style="top:320px"></div>
<div class="hl" style="top:340px"></div>
<div class="hl" style="top:360px"></div>
<div class="hl" style="top:380px"></div>
<div class="hl" style="top:400px"></div>
<div class="hl" style="top:420px"></div>
<div class="hl" style="top:440px"></div>
<div class="hl" style="top:460px"></div>
<div class="hl" style="top:480px"></div>
<div class="hl" style="top:500px"></div>
<div class="hl" style="top:520px"></div>
<div class="hl" style="top:540px"></div>
<div class="hl" style="top:560px"></div>
<div class="hl" style="top:580px"></div>
<div class="hl" style="top:600px"></div>
<div class="hl" style="top:620px"></div>
<div class="hl" style="top:641px"></div>
<div class="hl" style="top:662px"></div>
<div class="hl" style="top:683px"></div>
<div class="hl" style="top:704px"></div>
<div class="hl" style="top:725px"></div>
<div class="hl" style="top:746px"></div>
<div class="hl" style="top:767px"></div>
<div class="hl" style="top:788px"></div>
<div class="hl" style="top:809px"></div>
<div class="hl" style="top:830px"></div>
<div class="hl" style="top:851px"></div>
<div class="hl" style="top:872px"></div>
<div class="hl" style="top:893px"></div>
<div class="vl" style="left:235px;top:217px;height:487px"></div>
<div class="vl" style="left:235px;top:725px;height:168px"></div>
<div class="vl" style="left:437px;top:217px;height:676px"></div>
<div class="vl" style="left:639px;top:217px;height:676px"></div>
<div class="vl" style="left:839px;top:217px;height:223px"></div>
<div class="vl" style="left:839px;top:460px;height:433px"></div>
<div class="vl" style="left:929px;top:217px;height:676px"></div>
<div class="vl" style="left:1075px;top:217px;height:676px"></div>
<div class="vl" style="left:1256px;top:217px;height:676px"></div>
<div class="vl" style="left:1346px;top:217px;height:43px"></div>
<div class="vl" style="left:1346px;top:280px;height:613px"></div>
<div class="vl" style="left:1436px;top:217px;height:676px"></div>
<div class="vl" style="left:1444px;top:217px;height:676px"></div>
<div style="position:absolute;left:46px;top:218px;width:190px;height:23px;background:#ffff00"></div>
<div style="position:absolute;left:46px;top:360px;width:190px;height:21px;background:#e6e9f8"></div>
<div style="position:absolute;left:46px;top:380px;width:190px;height:21px;background:#ffb6c1"></div>
<div style="position:absolute;left:46px;top:420px;width:190px;height:21px;background:#add8e6"></div>
<div style="position:absolute;left:46px;top:480px;width:190px;height:21px;background:#ffa500"></div>
<div style="position:absolute;left:639px;top:520px;width:201px;height:21px;background:#90ee90"></div>
<div style="position:absolute;left:639px;top:540px;width:201px;height:21px;background:#fffde6"></div>
<div style="position:absolute;left:639px;top:560px;width:201px;height:21px;background:#98fb98"></div>
<div style="position:absolute;left:639px;top:580px;width:201px;height:21px;background:#e3ffe3"></div>
<div style="position:absolute;left:639px;top:600px;width:201px;height:21px;background:#fff8d2"></div>
<div style="position:absolute;left:639px;top:620px;width:201px;height:22px;background:#f0fff0"></div>
<div style="position:absolute;left:639px;top:641px;width:201px;height:22px;background:#7cfc00"></div>
<div style="position:absolute;left:639px;top:662px;width:201px;height:22px;background:#d3d3d3"></div>
<div style="position:absolute;left:46px;top:704px;width:190px;height:22px;background:#ffe5b6"></div>
<div class="c b" style="left:45px;width:190px;text-align:center;top:219px;height:23px;line-height:24px;font-size:15.8px;">LITTER INFORMATION</div>
<div class="c" style="left:49px;top:242px;height:20px;line-height:20px;">Litter Name:</div>
<div class="c" style="left:239px;top:242px;height:20px;line-height:20px;">Spring 2024 Litter</div>
<div class="c" style="left:49px;top:262px;height:20px;line-height:20px;">Date of Birth:</div>
<div class="c" style="left:239px;top:262px;height:20px;line-height:20px;">2024-03-15</div>
<div class="c" style="left:49px;top:282px;height:20px;line-height:20px;">Total Born:</div>
<div class="c" style="left:239px;top:282px;height:20px;line-height:20px;">8</div>
<div class="c" style="left:49px;top:302px;height:20px;line-height:20px;">Males:</div>
<div class="c" style="left:239px;top:302px;height:20px;line-height:20px;">4</div>
<div class="c" style="left:49px;top:322px;height:20px;line-height:20px;">FCI Code:</div>
<div class="c" style="left:239px;top:322px;height:20px;line-height:20px;">ABC-123-XYZ</div>
<div class="c" style="left:1079px;top:242px;height:20px;line-height:20px;">Status:</div>
<div class="c" style="left:1260px;top:242px;height:20px;line-height:20px;">Active???</div>
<div class="c" style="left:1079px;top:262px;height:20px;line-height:20px;">Breed:</div>
<div class="c" style="left:1260px;top:262px;height:20px;line-height:20px;">Golden Retriever</div>
<div class="c" style="left:843px;top:282px;height:20px;line-height:20px;">Alive:</div>
<div class="c" style="left:933px;top:282px;height:20px;line-height:20px;">7</div>
<div class="c" style="left:1260px;top:282px;height:20px;line-height:20px;">Deceased:</div>
<div class="c" style="left:1350px;top:282px;height:20px;line-height:20px;">1 (stillborn)</div>
<div class="c" style="left:843px;top:302px;height:20px;line-height:20px;">Females:</div>
<div class="c" style="left:933px;top:302px;height:20px;line-height:20px;">3</div>
<div class="c b" style="left:49px;top:362px;height:20px;line-height:20px;">PARENTS:</div>
<div class="c b" style="left:49px;top:382px;height:20px;line-height:20px;">Mother:</div>
<div class="c" style="left:239px;top:382px;height:20px;line-height:20px;">Bella Golden Star</div>
<div class="c" style="left:441px;top:382px;height:20px;line-height:20px;">DOB: 2019-03-15</div>
<div class="c" style="left:643px;top:382px;height:20px;line-height:20px;">Microchip: 982765001234567</div>
<div class="c" style="left:843px;top:382px;height:20px;line-height:20px;">Weight: 28kg</div>
<div class="c" style="left:239px;top:402px;height:20px;line-height:20px;">Breed: Golden Retriever</div>
<div class="c" style="left:441px;top:402px;height:20px;line-height:20px;">Color: Golden</div>
<div class="c" style="left:643px;top:402px;height:20px;line-height:20px;">Pedigree: PED-12345-GR</div>
<div class="c b" style="left:49px;top:422px;height:20px;line-height:20px;">Father:</div>
<div class="c" style="left:239px;top:422px;height:20px;line-height:20px;">Rocky Mountain King</div>
<div class="c" style="left:441px;top:422px;height:20px;line-height:20px;">DOB: 01/20/2018</div>
<div class="c" style="left:643px;top:422px;height:20px;line-height:20px;">chip: 982765001234568</div>
<div class="c" style="left:843px;top:422px;height:20px;line-height:20px;">Weight: 35 kg</div>
<div class="c" style="left:239px;top:442px;height:20px;line-height:20px;">Breed: Golden Retriever</div>
<div class="c" style="left:441px;top:442px;height:20px;line-height:20px;">Color: dark golden</div>
<div class="c" style="left:643px;top:442px;height:20px;line-height:20px;">Pedigree Number: PED-67890-GR</div>
<div class="c b" style="left:49px;top:482px;height:20px;line-height:20px;">PUPPIES:</div>
<div class="c b" style="left:49px;top:502px;height:20px;line-height:20px;">Name</div>
<div class="c" style="left:239px;top:502px;height:20px;line-height:20px;">Sex</div>
<div class="c" style="left:441px;top:502px;height:20px;line-height:20px;">Color</div>
<div class="c" style="left:643px;top:502px;height:20px;line-height:20px;">Status</div>
<div class="c" style="left:843px;top:502px;height:20px;line-height:20px;">Current Wt</div>
<div class="c" style="left:933px;top:502px;height:20px;line-height:20px;">Microchip</div>
<div class="c" style="left:1079px;top:502px;height:20px;line-height:20px;">Buyer</div>
<div class="c" style="left:1260px;top:502px;height:20px;line-height:20px;">Price</div>
<div class="c" style="left:1350px;top:502px;height:20px;line-height:20px;">Paid?</div>
<div class="c" style="left:1440px;top:502px;height:20px;line-height:20px;width:4px;overflow:hidden;">N</div>
<div class="c b" style="left:49px;top:522px;height:20px;line-height:20px;">Max</div>
<div class="c" style="left:239px;top:522px;height:20px;line-height:20px;">Male</div>
<div class="c" style="left:441px;top:522px;height:20px;line-height:20px;">golden</div>
<div class="c b" style="left:643px;top:522px;height:20px;line-height:20px;">SOLD</div>
<div class="c" style="left:843px;top:522px;height:20px;line-height:20px;">8.5kg</div>
<div class="c" style="left:933px;top:522px;height:20px;line-height:20px;">982765001234569</div>
<div class="c" style="left:1079px;top:522px;height:20px;line-height:20px;">John Smith (555-1234)</div>
<div class="c" style="left:1260px;top:522px;height:20px;line-height:20px;">$1,800</div>
<div class="c" style="left:1350px;top:522px;height:20px;line-height:20px;">Yes</div>
<div class="c" style="left:1440px;top:522px;height:20px;line-height:20px;width:4px;overflow:hidden;">p</div>
<div class="c b" style="left:49px;top:542px;height:20px;line-height:20px;">Luna</div>
<div class="c" style="left:239px;top:542px;height:20px;line-height:20px;">F</div>
<div class="c" style="left:441px;top:542px;height:20px;line-height:20px;">light golden</div>
<div class="c" style="left:643px;top:542px;height:20px;line-height:20px;">Reserved</div>
<div class="c" style="left:843px;top:542px;height:20px;line-height:20px;">7.8</div>
<div class="c" style="left:933px;top:542px;height:20px;line-height:20px;">98276500123570</div>
<div class="c" style="left:1079px;top:542px;height:20px;line-height:20px;">Sarah J - sarah@email.com</div>
<div class="c" style="left:1260px;top:542px;height:20px;line-height:20px;">1800</div>
<div class="c" style="left:1350px;top:542px;height:20px;line-height:20px;">Deposit $500</div>
<div class="c" style="left:1440px;top:542px;height:20px;line-height:20px;width:4px;overflow:hidden;">p</div>
<div class="c b" style="left:49px;top:562px;height:20px;line-height:20px;">Charlie</div>
<div class="c" style="left:239px;top:562px;height:20px;line-height:20px;">m</div>
<div class="c" style="left:441px;top:562px;height:20px;line-height:20px;">Golden</div>
<div class="c" style="left:643px;top:562px;height:20px;line-height:20px;">sold</div>
<div class="c" style="left:843px;top:562px;height:20px;line-height:20px;">8.2 kg</div>
<div class="c" style="left:1079px;top:562px;height:20px;line-height:20px;">Mike Brown</div>
<div class="c" style="left:1260px;top:562px;height:20px;line-height:20px;">1,800</div>
<div class="c" style="left:1350px;top:562px;height:20px;line-height:20px;">PAID</div>
<div class="c b" style="left:49px;top:582px;height:20px;line-height:20px;">Daisy</div>
<div class="c" style="left:239px;top:582px;height:20px;line-height:20px;">Female</div>
<div class="c" style="left:441px;top:582px;height:20px;line-height:20px;">gold</div>
<div class="c" style="left:643px;top:582px;height:20px;line-height:20px;">Available</div>
<div class="c" style="left:843px;top:582px;height:20px;line-height:20px;">7.5kg</div>
<div class="c" style="left:933px;top:582px;height:20px;line-height:20px;">982765001234571</div>
<div class="c" style="left:1440px;top:582px;height:20px;line-height:20px;width:4px;overflow:hidden;">s</div>
<div class="c b" style="left:49px;top:602px;height:20px;line-height:20px;">Cooper</div>
<div class="c" style="left:239px;top:602px;height:20px;line-height:20px;">M</div>
<div class="c" style="left:441px;top:602px;height:20px;line-height:20px;">dark golden</div>
<div class="c" style="left:643px;top:602px;height:20px;line-height:20px;">Reserved</div>
<div class="c" style="left:843px;top:602px;height:20px;line-height:20px;">9.1</div>
<div class="c" style="left:933px;top:602px;height:20px;line-height:20px;">98276500123572</div>
<div class="c" style="left:1079px;top:602px;height:20px;line-height:20px;">Lisa - 555-9999</div>
<div class="c" style="left:1260px;top:602px;height:20px;line-height:20px;">$1800</div>
<div class="c" style="left:1350px;top:602px;height:20px;line-height:20px;">no</div>
<div class="c" style="left:1440px;top:602px;height:20px;line-height:20px;width:4px;overflow:hidden;">r</div>
<div class="c b" style="left:49px;top:622px;height:21px;line-height:21px;">Molly</div>
<div class="c" style="left:239px;top:622px;height:21px;line-height:21px;">f</div>
<div class="c" style="left:441px;top:622px;height:21px;line-height:21px;">golden</div>
<div class="c" style="left:643px;top:622px;height:21px;line-height:21px;">Available</div>
<div class="c" style="left:843px;top:622px;height:21px;line-height:21px;">7.9kg</div>
<div class="c b" style="left:49px;top:643px;height:21px;line-height:21px;">Buddy</div>
<div class="c" style="left:239px;top:643px;height:21px;line-height:21px;">male</div>
<div class="c" style="left:441px;top:643px;height:21px;line-height:21px;">light gold</div>
<div class="c b" style="left:643px;top:643px;height:21px;line-height:21px;">SOLD</div>
<div class="c" style="left:843px;top:643px;height:21px;line-height:21px;">8.7</div>
<div class="c" style="left:933px;top:643px;height:21px;line-height:21px;">982765001234573</div>
<div class="c" style="left:1079px;top:643px;height:21px;line-height:21px;">Tom Wilson tom@email</div>
<div class="c" style="left:1260px;top:643px;height:21px;line-height:21px;">1800</div>
<div class="c" style="left:1350px;top:643px;height:21px;line-height:21px;">yes</div>
<div class="c" style="left:1440px;top:643px;height:21px;line-height:21px;width:4px;overflow:hidden;">c</div>
<div class="c b" style="left:49px;top:664px;height:21px;line-height:21px;">Unnamed Puppy 8</div>
<div class="c" style="left:643px;top:664px;height:21px;line-height:21px;">Deceased</div>
<div class="c" style="left:1440px;top:664px;height:21px;line-height:21px;width:4px;overflow:hidden;">s</div>
<div class="c b" style="left:49px;top:706px;height:21px;line-height:21px;font-size:13.7px;">WEIGHT TRACKING (in kg... mostly)</div>
<div class="c" style="left:49px;top:727px;height:21px;line-height:21px;">Puppy Name</div>
<div class="c b" style="left:239px;top:727px;height:21px;line-height:21px;">Week 1</div>
<div class="c" style="left:441px;top:727px;height:21px;line-height:21px;">Week 2</div>
<div class="c" style="left:643px;top:727px;height:21px;line-height:21px;">Week 3</div>
<div class="c b" style="left:843px;top:727px;height:21px;line-height:21px;">Week 4</div>
<div class="c" style="left:933px;top:727px;height:21px;line-height:21px;">Week 5</div>
<div class="c" style="left:1079px;top:727px;height:21px;line-height:21px;">Week 6</div>
<div class="c b" style="left:1260px;top:727px;height:21px;line-height:21px;">Week 7</div>
<div class="c" style="left:1350px;top:727px;height:21px;line-height:21px;">Week 8</div>
<div class="c" style="left:1440px;top:727px;height:21px;line-height:21px;width:4px;overflow:hidden;">W</div>
<div class="c" style="left:49px;top:748px;height:21px;line-height:21px;">Max</div>
<div class="c" style="left:239px;top:748px;height:21px;line-height:21px;">0.6</div>
<div class="c" style="left:441px;top:748px;height:21px;line-height:21px;">1.2kg</div>
<div class="c" style="left:643px;top:748px;height:21px;line-height:21px;">1.9</div>
<div class="c" style="left:843px;top:748px;height:21px;line-height:21px;">2.8</div>
<div class="c" style="left:933px;top:748px;height:21px;line-height:21px;">3.5kg</div>
<div class="c" style="left:1079px;top:748px;height:21px;line-height:21px;">4.2</div>
<div class="c" style="left:1260px;top:748px;height:21px;line-height:21px;">5.1</div>
<div class="c" style="left:1350px;top:748px;height:21px;line-height:21px;">6.3</div>
<div class="c" style="left:1440px;top:748px;height:21px;line-height:21px;width:4px;overflow:hidden;">7</div>
<div class="c" style="left:49px;top:769px;height:21px;line-height:21px;">Luna</div>
<div class="c" style="left:239px;top:769px;height:21px;line-height:21px;">0.55</div>
<div class="c" style="left:441px;top:769px;height:21px;line-height:21px;">1.1</div>
<div class="c" style="left:643px;top:769px;height:21px;line-height:21px;">1.7kg</div>
<div class="c" style="left:843px;top:769px;height:21px;line-height:21px;">2.5</div>
<div class="c" style="left:933px;top:769px;height:21px;line-height:21px;">3.2</div>
<div class="c" style="left:1079px;top:769px;height:21px;line-height:21px;">3.9kg</div>
<div class="c" style="left:1260px;top:769px;height:21px;line-height:21px;">4.7</div>
<div class="c" style="left:1350px;top:769px;height:21px;line-height:21px;">5.8</div>
<div class="c" style="left:1440px;top:769px;height:21px;line-height:21px;width:4px;overflow:hidden;">6</div>
<div class="c" style="left:49px;top:790px;height:21px;line-height:21px;">Charlie</div>
<div class="c" style="left:441px;top:790px;height:21px;line-height:21px;">1.15</div>
<div class="c" style="left:643px;top:790px;height:21px;line-height:21px;">1.8</div>
<div class="c" style="left:843px;top:790px;height:21px;line-height:21px;">2.7kg</div>
<div class="c" style="left:933px;top:790px;height:21px;line-height:21px;">3.4</div>
<div class="c" style="left:1079px;top:790px;height:21px;line-height:21px;">4.1</div>
<div class="c" style="left:1260px;top:790px;height:21px;line-height:21px;">5.0kg</div>
<div class="c" style="left:1350px;top:790px;height:21px;line-height:21px;">6.2</div>
<div class="c" style="left:1440px;top:790px;height:21px;line-height:21px;width:4px;overflow:hidden;">7</div>
<div class="c" style="left:49px;top:811px;height:21px;line-height:21px;">Daisy</div>
<div class="c" style="left:239px;top:811px;height:21px;line-height:21px;">0.50</div>
<div class="c" style="left:441px;top:811px;height:21px;line-height:21px;">1.0</div>
<div class="c" style="left:643px;top:811px;height:21px;line-height:21px;">1.6</div>
<div class="c" style="left:843px;top:811px;height:21px;line-height:21px;">2.3kg</div>
<div class="c" style="left:933px;top:811px;height:21px;line-height:21px;">3.0</div>
<div class="c" style="left:1079px;top:811px;height:21px;line-height:21px;">3.7</div>
<div class="c" style="left:1260px;top:811px;height:21px;line-height:21px;">4.5kg</div>
<div class="c" style="left:1350px;top:811px;height:21px;line-height:21px;">5.5</div>
<div class="c" style="left:1440px;top:811px;height:21px;line-height:21px;width:4px;overflow:hidden;">6</div>
<div class="c" style="left:49px;top:832px;height:21px;line-height:21px;">Cooper</div>
<div class="c" style="left:239px;top:832px;height:21px;line-height:21px;">0.65kg</div>
<div class="c" style="left:441px;top:832px;height:21px;line-height:21px;">1.3</div>
<div class="c" style="left:643px;top:832px;height:21px;line-height:21px;">2.0</div>
<div class="c" style="left:843px;top:832px;height:21px;line-height:21px;">3.0</div>
<div class="c" style="left:933px;top:832px;height:21px;line-height:21px;">3.8kg</div>
<div class="c" style="left:1079px;top:832px;height:21px;line-height:21px;">4.6</div>
<div class="c" style="left:1260px;top:832px;height:21px;line-height:21px;">5.5</div>
<div class="c" style="left:1350px;top:832px;height:21px;line-height:21px;">6.8kg</div>
<div class="c" style="left:1440px;top:832px;height:21px;line-height:21px;width:4px;overflow:hidden;">8</div>
<div class="c" style="left:49px;top:853px;height:21px;line-height:21px;">Molly</div>
<div class="c" style="left:239px;top:853px;height:21px;line-height:21px;">0.52</div>
<div class="c" style="left:441px;top:853px;height:21px;line-height:21px;">1.05kg</div>
<div class="c" style="left:643px;top:853px;height:21px;line-height:21px;">1.65</div>
<div class="c" style="left:843px;top:853px;height:21px;line-height:21px;">2.4</div>
<div class="c" style="left:933px;top:853px;height:21px;line-height:21px;">3.1kg</div>
<div class="c" style="left:1079px;top:853px;height:21px;line-height:21px;">3.8</div>
<div class="c" style="left:1260px;top:853px;height:21px;line-height:21px;">4.6</div>
<div class="c" style="left:1350px;top:853px;height:21px;line-height:21px;">5.7kg</div>
<div class="c" style="left:1440px;top:853px;height:21px;line-height:21px;width:4px;overflow:hidden;">6</div>
<div class="c" style="left:49px;top:874px;height:21px;line-height:21px;">Buddy</div>
<div class="c" style="left:239px;top:874px;height:21px;line-height:21px;">0.58</div>
<div class="c" style="left:441px;top:874px;height:21px;line-height:21px;">1.18</div>
<div class="c" style="left:643px;top:874px;height:21px;line-height:21px;">1.85kg</div>
<div class="c" style="left:843px;top:874px;height:21px;line-height:21px;">2.75</div>
<div class="c" style="left:933px;top:874px;height:21px;line-height:21px;">3.6</div>
<div class="c" style="left:1079px;top:874px;height:21px;line-height:21px;">4.3kg</div>
<div class="c" style="left:1260px;top:874px;height:21px;line-height:21px;">5.2</div>
<div class="c" style="left:1350px;top:874px;height:21px;line-height:21px;">6.4</div>
<div class="c" style="left:1440px;top:874px;height:21px;line-height:21px;width:4px;overflow:hidden;">7</div><div class="abs" style="left:639px;top:260px;width:201px;height:21px;border:2px solid #1a66e3"></div>
<div class="abs" style="left:834px;top:275.5px;width:11px;height:11px;border-radius:50%;background:#1a66e3;border:1px solid #fff"></div>
</div>
</body></html>
